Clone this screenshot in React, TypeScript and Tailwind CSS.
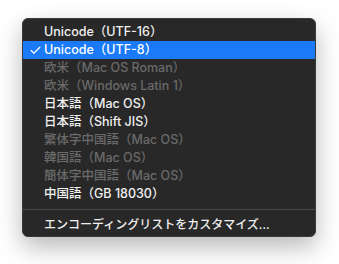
import { Check } from 'lucide-react'

type Item = { label: string; disabled?: boolean; checked?: boolean }

const items: Item[] = [
  { label: 'Unicode（UTF-16）' },
  { label: 'Unicode（UTF-8）', checked: true },
  { label: '欧米（Mac OS Roman）', disabled: true },
  { label: '欧米（Windows Latin 1）', disabled: true },
  { label: '日本語（Mac OS）' },
  { label: '日本語（Shift JIS）' },
  { label: '繁体字中国語（Mac OS）', disabled: true },
  { label: '韓国語（Mac OS）', disabled: true },
  { label: '簡体字中国語（Mac OS）', disabled: true },
  { label: '中国語（GB 18030）' },
]

const font = { fontFamily: '"Inter", "Noto Sans CJK JP", sans-serif' }

export default function App() {
  return (
    <div className="w-[339px] h-[264px] bg-white pt-[18px] pl-[22px]" style={font}>
      <div className="w-[294px] h-[219px] rounded-[6px] bg-[#282828] border border-[#3a3a3a] shadow-[0_10px_24px_rgba(0,0,0,0.28)] pt-[4px] overflow-hidden">
        {items.map((it) => (
          <div
            key={it.label}
            className={`h-[18px] flex items-center pt-[1px] text-[12.5px] leading-none ${
              it.checked ? 'bg-[#1a7af8] text-white' : it.disabled ? 'text-[#6a6a6a]' : 'text-[#f0f0f0]'
            }`}
          >
            <span className="w-[21px] flex justify-end pr-[2px]">
              {it.checked && <Check size={13} strokeWidth={2.2} />}
            </span>
            <span className="font-medium">{it.label}</span>
          </div>
        ))}
        <div className="h-[1px] bg-[#4a4a4a] mt-[6px] mb-[5px]" />
        <div className="h-[18px] flex items-center pt-[1px] text-[12px] leading-none text-[#f0f0f0] pl-[21px]">
          <span className="font-medium">エンコーディングリストをカスタマイズ...</span>
        </div>
      </div>
    </div>
  )
}
